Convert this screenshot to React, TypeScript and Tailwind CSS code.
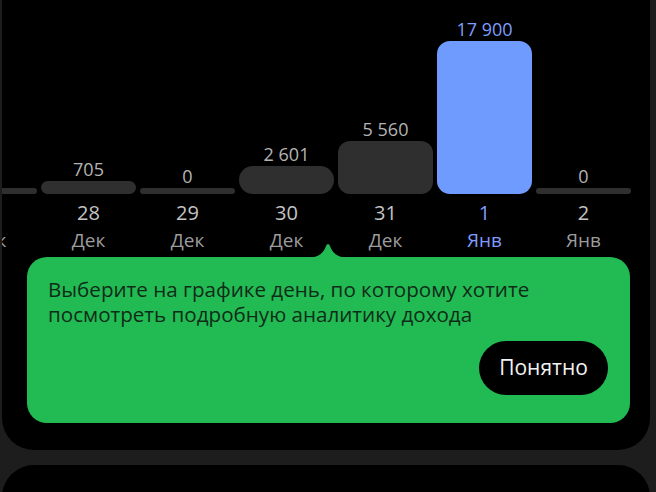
import React from "react";

type Day = {
  day: string;
  month: string;
  value: string;
  barH: number;
  radius: number;
  active?: boolean;
};

const days: Day[] = [
  { day: "27", month: "Дек", value: "", barH: 6, radius: 3 },
  { day: "28", month: "Дек", value: "705", barH: 13, radius: 7 },
  { day: "29", month: "Дек", value: "0", barH: 6, radius: 3 },
  { day: "30", month: "Дек", value: "2 601", barH: 28, radius: 14 },
  { day: "31", month: "Дек", value: "5 560", barH: 53, radius: 12 },
  { day: "1", month: "Янв", value: "17 900", barH: 153, radius: 13, active: true },
  { day: "2", month: "Янв", value: "0", barH: 6, radius: 3 },
];

const font = { fontFamily: '"Open Sans", "Noto Sans", sans-serif' };

function Column({ d }: { d: Day }) {
  return (
    <div className="flex w-[99px] shrink-0 flex-col items-center">
      <div className="flex h-[194px] w-full flex-col items-center justify-end px-[2px]">
        {d.value && (
          <div
            className={`mb-[2px] text-[18px] leading-[20px] ${
              d.active ? "text-[#7f9dff]" : "text-[#b4b4b4]"
            }`}
          >
            {d.value}
          </div>
        )}
        <div
          className={`w-full ${d.active ? "bg-[#6f9bff]" : "bg-[#2f2f2f]"}`}
          style={{ height: d.barH, borderRadius: d.radius }}
        />
      </div>
      <div
        className={`mt-[7px] text-[20px] leading-[24px] ${
          d.active ? "text-[#7f9dff]" : "text-[#c4c4c4]"
        }`}
      >
        {d.day}
      </div>
      <div
        className={`mt-[5px] text-[19px] leading-[20px] ${
          d.active ? "text-[#7f9dff]" : "text-[#9c9c9c]"
        }`}
      >
        {d.month}
      </div>
    </div>
  );
}

export default function App() {
  return (
    <div
      className="flex h-[492px] w-[656px] flex-col overflow-hidden bg-[#1d1d1d]"
      style={font}
    >
      <div className="ml-[2px] flex h-[450px] w-[648px] shrink-0 flex-col overflow-hidden rounded-b-[32px] bg-black">
        <div className="-ml-[62px] flex">
          {days.map((d) => (
            <Column key={d.day} d={d} />
          ))}
        </div>
        <div className="relative ml-[25px] mt-[7px] flex h-[166px] w-[603px] flex-col rounded-[20px] bg-[#22ba53] pb-[28px] pl-[21px] pr-[22px] pt-[20px]">
          <svg
            className="absolute left-[279px] top-[-14px]"
            width="44"
            height="15"
            viewBox="0 0 44 15"
          >
            <path
              d="M0 15 C 12 15 18 10 20 3 Q 22 -1 24 3 C 26 10 32 15 44 15 Z"
              fill="#22ba53"
            />
          </svg>
          <div className="text-[20.6px] leading-[25px] text-[#0f2c18]">
            <div>Выберите на графике день, по которому хотите</div>
            <div>посмотреть подробную аналитику дохода</div>
          </div>
          <div className="mt-auto flex justify-end">
            <button className="flex h-[54px] w-[129px] items-center justify-center rounded-full bg-black text-[21px] text-[#f2f2f2]">
              Понятно
            </button>
          </div>
        </div>
      </div>
      <div className="ml-[2px] mt-[15px] h-[60px] w-[648px] shrink-0 rounded-t-[32px] bg-black" />
    </div>
  );
}
